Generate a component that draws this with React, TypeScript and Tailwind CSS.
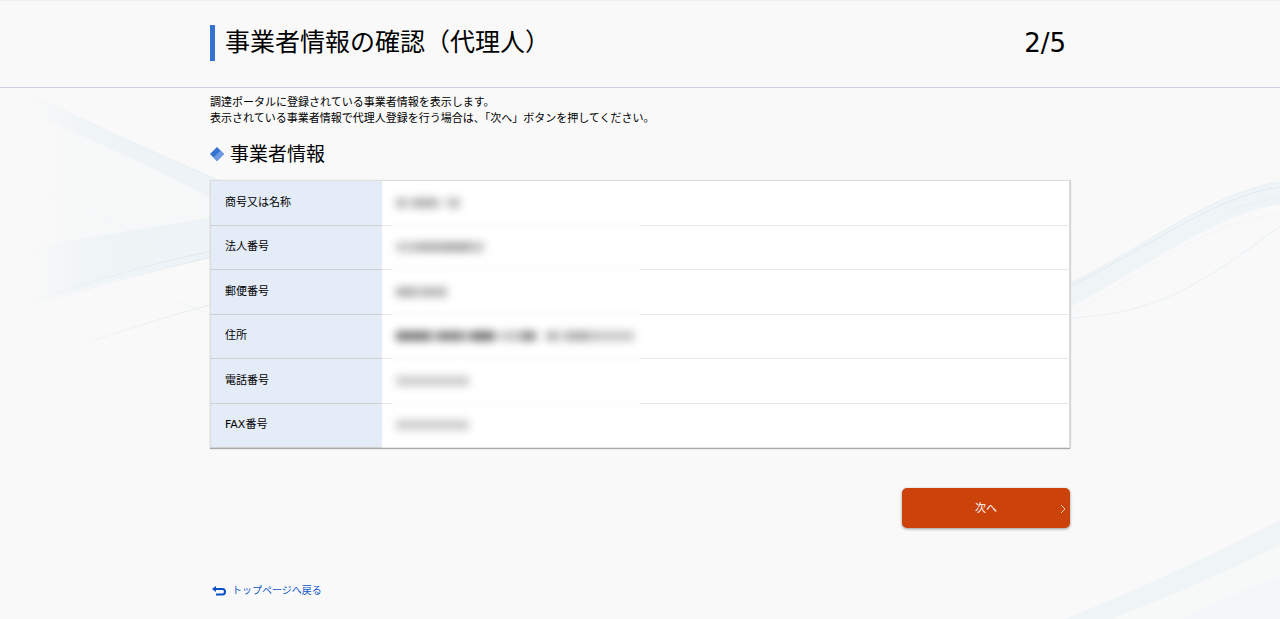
import React from 'react'

type Row = {
  label: string
  // widths and tones of the masked value, left to right
  mask: string[]
}

const rows: Row[] = [
  { label: '商号又は名称', mask: ['w-[10px] bg-[#b8b8b8]', 'w-[6px] bg-[#e6e6e6]', 'w-[26px] bg-[#b4b4b4]', 'w-[10px] bg-[#efefef]', 'w-[12px] bg-[#bdbdbd]'] },
  { label: '法人番号', mask: ['w-[20px] bg-[#c8c8c8]', 'w-[30px] bg-[#b2b2b2]', 'w-[24px] bg-[#aaaaaa]', 'w-[14px] bg-[#c4c4c4]'] },
  { label: '郵便番号', mask: ['w-[20px] bg-[#b0b0b0]', 'w-[5px] bg-[#d4d4d4]', 'w-[26px] bg-[#b8b8b8]'] },
  { label: '住所', mask: ['w-[34px] bg-[#7c7c7c]', 'w-[8px] bg-[#c0c0c0]', 'w-[24px] bg-[#858585]', 'w-[10px] bg-[#b4b4b4]', 'w-[22px] bg-[#767676]', 'w-[10px] bg-[#d8d8d8]', 'w-[18px] bg-[#c4c4c4]', 'w-[14px] bg-[#8c8c8c]', 'w-[10px]', 'w-[12px] bg-[#b4b4b4]', 'w-[8px] bg-[#dddddd]', 'w-[24px] bg-[#adadad]', 'w-[44px] bg-[#c6c6c6]'] },
  { label: '電話番号', mask: ['w-[73px] bg-[#cccccc]'] },
  { label: 'FAX番号', mask: ['w-[73px] bg-[#cccccc]'] },
]

function LeftWave() {
  return (
    <svg className="absolute top-0 left-0 w-[220px] h-[300px]" viewBox="0 88 220 300" fill="none" aria-hidden="true">
      <defs>
        <linearGradient id="fadeLeft" x1="30" y1="0" x2="210" y2="0" gradientUnits="userSpaceOnUse">
          <stop offset="0" stopColor="#edf3f6" stopOpacity="0" />
          <stop offset="0.3" stopColor="#edf3f6" stopOpacity="0.8" />
          <stop offset="1" stopColor="#edf3f6" />
        </linearGradient>
        <linearGradient id="lineLeft" x1="20" y1="0" x2="210" y2="0" gradientUnits="userSpaceOnUse">
          <stop offset="0" stopColor="#dce7f0" stopOpacity="0" />
          <stop offset="1" stopColor="#dde7ef" />
        </linearGradient>
      </defs>
      <path d="M25 91 Q120 138 220 181 V203 Q120 150 25 112 Z" fill="url(#fadeLeft)" />
      <path d="M25 112 Q120 150 220 203 V216 Q120 232 30 247 Z" fill="url(#fadeLeft)" opacity="0.25" />
      <path d="M30 247 Q120 232 220 216 V256 Q120 275 30 306 Z" fill="url(#fadeLeft)" />
      <path d="M20 186 Q120 222 175 253" stroke="url(#lineLeft)" opacity="0.5" />
      <path d="M25 91 Q120 138 220 181" stroke="url(#lineLeft)" opacity="0.7" />
      <path d="M20 305 Q120 270 220 249" stroke="url(#lineLeft)" />
      <path d="M20 309 Q120 278 220 255" stroke="url(#lineLeft)" />
      <path d="M25 365 Q130 326 220 302" stroke="url(#lineLeft)" opacity="0.8" />
      <path d="M110 285 Q160 294 220 318" stroke="url(#lineLeft)" opacity="0.3" />
    </svg>
  )
}

function RightWave() {
  return (
    <svg className="absolute top-0 right-0 w-[220px] h-[531px]" viewBox="1060 88 220 531" fill="none" aria-hidden="true">
      <path d="M1060 288 C1140 251 1212 191 1280 182 V204 C1212 216 1150 266 1060 312 Z" fill="#eff4f7" />
      <path d="M1060 288 C1140 251 1212 191 1280 182" stroke="#e8f0f5" />
      <path d="M1060 291 C1140 254 1212 196 1280 187" stroke="#e1e9f1" />
      <path d="M1230 210 Q1260 200 1280 198" stroke="#e8eff5" />
      <path d="M1060 321 C1140 276 1200 223 1280 214" stroke="#f2f5f8" />
      <path d="M1060 318 C1150 318 1200 286 1280 226" stroke="#edf3f7" strokeWidth="1.5" />
      <path d="M1060 621 Q1170 577 1280 520 V545 Q1190 590 1106 621 Z" fill="#eff4f7" />
      <path d="M1106 621 Q1190 590 1280 545 V576 Q1220 598 1178 621 Z" fill="#f7f9f8" />
      <path d="M1178 621 Q1220 598 1280 576 V621 Z" fill="#f4f7f9" />
    </svg>
  )
}

export default function App() {
  return (
    <div className="min-h-screen flex flex-col bg-[#f9f9f9] text-black text-[11px] leading-4 font-['DejaVu_Sans','Noto_Sans_CJK_JP',sans-serif]">
      <header className="border-t border-t-[#f0f0f0] border-b border-b-[#c9d0dc] px-4">
        <div className="max-w-[860px] mx-auto h-[86px] pb-[2px] flex items-center justify-between pr-1">
          <h1 className="h-9 border-l-5 border-[#3472d0] pl-[10px] text-[25px] leading-9 font-normal">
            事業者情報の確認（代理人）
          </h1>
          <p className="text-[26px] leading-9">2/5</p>
        </div>
      </header>

      <main className="relative flex-1 px-4 pt-[7px]">
        <LeftWave />
        <RightWave />

        <div className="relative max-w-[860px] mx-auto">
          <p>
            調達ポータルに登録されている事業者情報を表示します。
            <br />
            表示されている事業者情報で代理人登録を行う場合は、「次へ」ボタンを押してください。
          </p>

          <h2 className="mt-[13px] flex items-center gap-[6px] text-[19px] leading-7">
            <svg className="w-[14px] h-[14px]" viewBox="0 0 14 14" aria-hidden="true">
              <path d="M7 0 14 7 7 14 0 7Z" fill="#3472d0" />
              <path d="M10.5 3.5 14 7 7 14 3.5 10.5Z" fill="#6b98df" />
            </svg>
            事業者情報
          </h2>

          <table className="mt-3 w-full h-[268px] border-collapse border border-[#dddddd] bg-white shadow-[0_1px_1px_#aaaaaa,1px_0_1px_#dddddd]">
            <tbody>
              {rows.map((row) => (
                <tr key={row.label}>
                  <th scope="row" className="w-[20%] pl-[14px] text-left font-normal bg-[#e4ecf8] border-b border-[#d0d0d0]">
                    {row.label}
                  </th>
                  <td className="relative pl-[14px] border-b border-[#e8e8e8]">
                    <div className="flex h-[10px] blur-[4px]">
                      {row.mask.map((m, i) => (
                        <span key={i} className={m} />
                      ))}
                    </div>
                    {row.label !== 'FAX番号' && (
                      <span className="absolute left-[10px] -bottom-1 w-[248px] h-2 bg-[#fdfdfd]" />
                    )}
                  </td>
                </tr>
              ))}
            </tbody>
          </table>

          <div className="mt-10 flex justify-end">
            <button
              type="button"
              className="relative w-[168px] h-10 pt-[2px] rounded-[5px] bg-[#cb420b] text-white shadow-[0_1px_3px_rgba(0,0,0,0.4)]"
            >
              次へ
              <svg className="absolute right-1 top-4 w-[6px] h-[10px]" viewBox="0 0 6 10" fill="none" aria-hidden="true">
                <path d="M1 1 5 5 1 9" stroke="#f5cdbd" />
              </svg>
            </button>
          </div>

          <a href="#" className="mt-[55px] inline-flex items-center gap-[6px] pl-[2px] text-[10px] leading-4 text-[#0f56c8]">
            <svg className="w-[14px] h-[10px]" viewBox="0 0 14 10" fill="none" aria-hidden="true">
              <path d="M3 3H10.5Q13 3 13 5.8T10.5 8.6H4" stroke="#0b4fc4" strokeWidth="2" />
              <path d="M0 3 4 0V6Z" fill="#0b4fc4" />
            </svg>
            トップページへ戻る
          </a>
        </div>
      </main>
    </div>
  )
}
